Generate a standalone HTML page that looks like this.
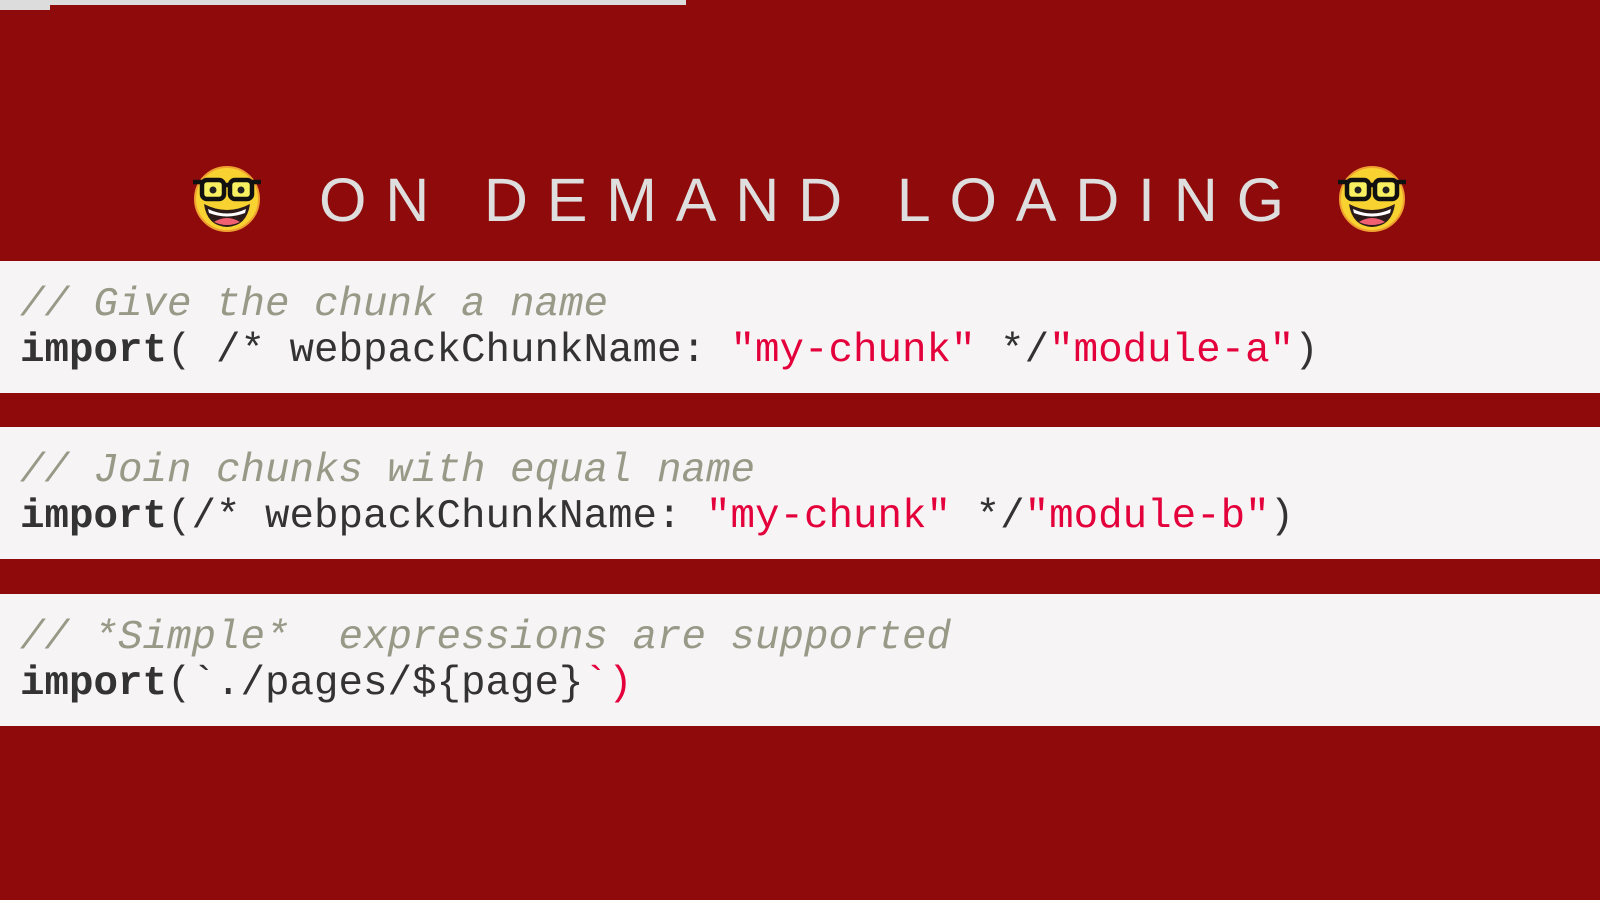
<!DOCTYPE html>
<html><head><meta charset="utf-8"><style>
html,body{margin:0;padding:0;}
body{width:1600px;height:900px;background:#8f0a0a;position:relative;overflow:hidden;font-family:"Liberation Sans",sans-serif;}
.bar{position:absolute;left:0;top:0;width:686px;height:5px;background:#dcdcdc;}
.box{position:absolute;left:0;top:0;width:50px;height:10px;background:#dcdcdc;}
.title{position:absolute;left:319px;top:165px;font-size:61px;line-height:70px;color:#dedede;letter-spacing:18.8px;white-space:nowrap;}
.emo{position:absolute;top:164px;width:70px;height:68px;}
.panel{position:absolute;left:0;width:1600px;height:132px;background:#f6f4f5;}
.line{position:absolute;left:20px;font-family:"Liberation Mono",monospace;font-size:40.85px;line-height:46px;white-space:pre;color:#333;}
.c{color:#999988;font-style:italic;}
.s{color:#e3003b;}
b{font-weight:bold;}
</style></head><body>
<div class="bar"></div><div class="box"></div>
<svg class="emo" style="left:192px" viewBox="0 0 70 68">
<circle cx="35" cy="35" r="32" fill="#f8d231" stroke="#f0a030" stroke-width="2"/>
<path d="M12 40 Q35 52 58 40 Q55 62 35 63 Q15 62 12 40Z" fill="#2a1a1a"/>
<path d="M16 45 Q35 54 54 45 L53 49 Q35 56 17 49Z" fill="#fff"/>
<path d="M22 58 Q35 50 48 58 Q35 64 22 58Z" fill="#f06070"/>
<rect x="10" y="16" width="22" height="19" rx="5" fill="#f8f060" stroke="#111" stroke-width="4.5"/>
<rect x="38" y="16" width="22" height="19" rx="5" fill="#f8f060" stroke="#111" stroke-width="4.5"/>
<path d="M1 18 L10 18 M32 21 L38 21 M60 18 L69 18" stroke="#111" stroke-width="4.5"/>
<circle cx="21" cy="26" r="3.5" fill="#222"/><circle cx="49" cy="26" r="3.5" fill="#222"/>
</svg>
<div class="title">ON DEMAND LOADING</div>
<svg class="emo" style="left:1337px" viewBox="0 0 70 68">
<circle cx="35" cy="35" r="32" fill="#f8d231" stroke="#f0a030" stroke-width="2"/>
<path d="M12 40 Q35 52 58 40 Q55 62 35 63 Q15 62 12 40Z" fill="#2a1a1a"/>
<path d="M16 45 Q35 54 54 45 L53 49 Q35 56 17 49Z" fill="#fff"/>
<path d="M22 58 Q35 50 48 58 Q35 64 22 58Z" fill="#f06070"/>
<rect x="10" y="16" width="22" height="19" rx="5" fill="#f8f060" stroke="#111" stroke-width="4.5"/>
<rect x="38" y="16" width="22" height="19" rx="5" fill="#f8f060" stroke="#111" stroke-width="4.5"/>
<path d="M1 18 L10 18 M32 21 L38 21 M60 18 L69 18" stroke="#111" stroke-width="4.5"/>
<circle cx="21" cy="26" r="3.5" fill="#222"/><circle cx="49" cy="26" r="3.5" fill="#222"/>
</svg>

<div class="panel" style="top:261px"></div>
<div class="line c" style="top:282px">// Give the chunk a name</div>
<div class="line" style="top:328px"><b>import</b>( /* webpackChunkName: <span class="s">"my-chunk"</span> */<span class="s">"module-a"</span>)</div>

<div class="panel" style="top:427px"></div>
<div class="line c" style="top:448px">// Join chunks with equal name</div>
<div class="line" style="top:494px"><b>import</b>(/* webpackChunkName: <span class="s">"my-chunk"</span> */<span class="s">"module-b"</span>)</div>

<div class="panel" style="top:594px"></div>
<div class="line c" style="top:615px">// *Simple*  expressions are supported</div>
<div class="line" style="top:661px"><b>import</b>(`./pages/${page}<span class="s">`)</span></div>
</body></html>
